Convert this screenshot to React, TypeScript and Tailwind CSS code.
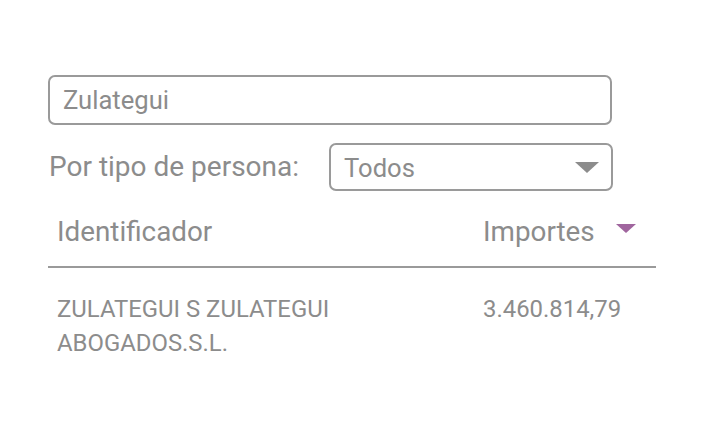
import React from "react";

export default function App() {
  const font = { fontFamily: "Roboto, 'Noto Sans', sans-serif" };
  return (
    <div className="w-[720px] h-[436px] bg-white text-[#8c8c8c]" style={font}>
      <div className="pl-[48px] pt-[75px] flex flex-col">
        <div className="w-[564px] h-[50px] border-2 border-[#9a9a9a] rounded-[7px] flex items-center pl-[13px] text-[25.6px]">
          Zulategui
        </div>
        <div className="mt-[18px] flex items-center h-[48px]">
          <div className="w-[281px] text-[28px] leading-none pl-px">Por tipo de persona:</div>
          <div className="w-[284px] h-[48px] border-2 border-[#9a9a9a] rounded-[7px] flex items-center justify-between pl-[13px] pr-[12px] text-[25.6px]">
            <span className="mt-[2px]">Todos</span>
            <svg width="24" height="11" viewBox="0 0 24 11">
              <polygon points="0,0 24,0 12,11" fill="#8c8c8c" />
            </svg>
          </div>
        </div>
        <div className="w-[608px] mt-[18px] h-[59px] grid grid-cols-[426px_182px] items-center border-b-2 border-[#9a9a9a] pb-[12px]">
          <div className="pl-[9px] text-[27.8px]">Identificador</div>
          <div className="pl-[9px] text-[27.8px] flex items-center">
            <span>Importes</span>
            <svg className="ml-[21px] mb-[6px]" width="20" height="9" viewBox="0 0 20 9">
              <polygon points="0,0 20,0 10,9" fill="#a0659e" />
            </svg>
          </div>
        </div>
        <div className="w-[608px] grid grid-cols-[426px_182px] pt-[24px] text-[23.9px] leading-[34px]">
          <div className="pl-[9px]">
            ZULATEGUI S ZULATEGUI
            <br />
            ABOGADOS.S.L.
          </div>
          <div className="pl-[9px]">3.460.814,79</div>
        </div>
      </div>
    </div>
  );
}
